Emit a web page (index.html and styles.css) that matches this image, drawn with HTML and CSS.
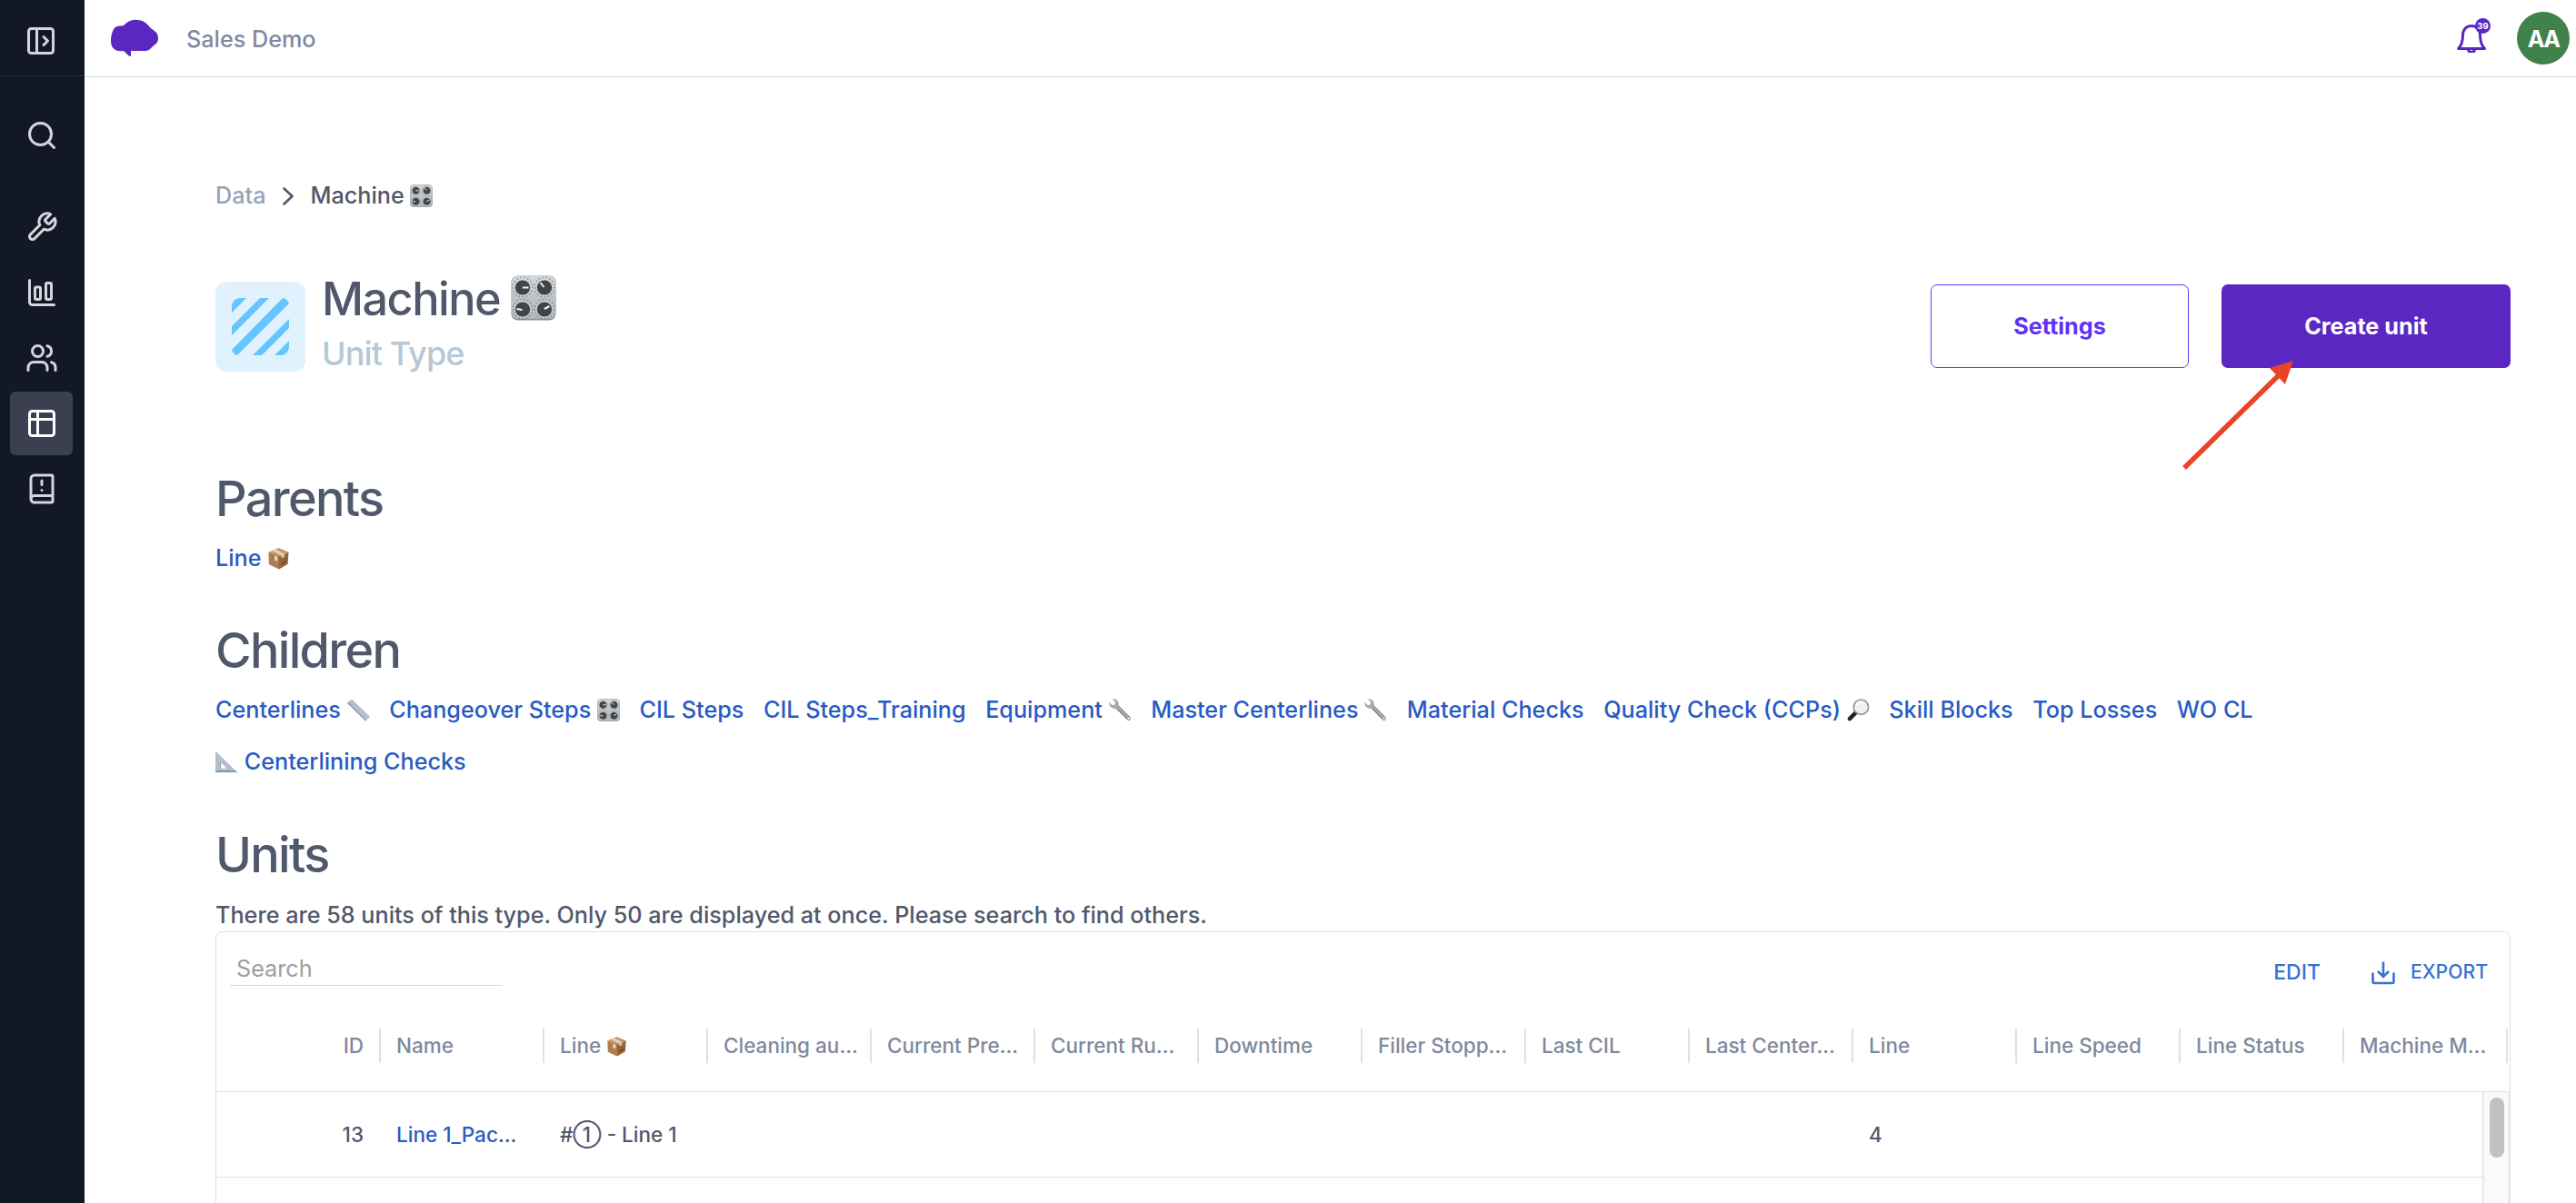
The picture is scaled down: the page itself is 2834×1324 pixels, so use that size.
FILE: index.html
```html
<!DOCTYPE html>
<html lang="en">
<head>
    <meta charset="UTF-8">
    <meta name="viewport" content="width=device-width, initial-scale=1.0">
    <title>Machine - Sales Demo</title>
    <link rel="stylesheet" href="styles.css">
</head>
<body>
    <!-- shared emoji pictures -->
    <svg class="defs" aria-hidden="true">
        <defs>
            <linearGradient id="metal" x1="0" y1="0" x2="0" y2="1">
                <stop offset="0" stop-color="#d6d9dc"/>
                <stop offset="0.5" stop-color="#bfc3c6"/>
                <stop offset="1" stop-color="#b8bbbe"/>
            </linearGradient>
            <symbol id="knobs" viewBox="0 0 50 50">
                <rect x="0.5" y="0.5" width="49" height="49" rx="7" fill="#8b8e91"/>
                <rect x="1" y="0.8" width="48" height="47" rx="6.5" fill="url(#metal)"/>
                <g fill="none" stroke="#6d7175" stroke-width="1.2" stroke-dasharray="1.2 2.8">
                    <circle cx="13" cy="13" r="10.8"/><circle cx="37" cy="13" r="10.8"/>
                    <circle cx="13" cy="37" r="10.8"/><circle cx="37" cy="37" r="10.8"/>
                </g>
                <g fill="#424548" stroke="#e3e5e6" stroke-width="0.8">
                    <circle cx="13" cy="13.5" r="8.6"/><circle cx="37" cy="13.5" r="8.6"/>
                    <circle cx="13" cy="37.5" r="8.6"/><circle cx="37" cy="37.5" r="8.6"/>
                </g>
                <path d="M13 13.5h6.5M36.5 13l-4-5M12.5 38l-6-1M37 37l5.5-3" stroke="#f2f3f3" stroke-width="2"/>
            </symbol>
            <symbol id="package" viewBox="0 0 26 26">
                <path d="M1.500 6 13.500 10.500V25.500L2 20z" fill="#b07c4c"/>
                <path d="M24.500 6 13.500 10.500v15L23.500 19.500z" fill="#936338"/>
                <path d="M1.500 6 13 1l11.500 5-11 4.500z" fill="#c39766"/>
                <path d="m5.500 4.200 4-1.700L20 8l-4 1.700z" fill="#e2d3bf"/>
                <path d="m16 9.700 4-1.700v3.500l-4 1.500z" fill="#d3bfa4"/>
                <path d="m8.500 10 3 1.200v5L8.500 15z" fill="#e6e2df"/>
                <path d="m16.500 19 5-2" stroke="#6d4724" stroke-width="1.600"/>
            </symbol>
            <symbol id="ruler" viewBox="0 0 26 26">
                <path d="M0 5 5 0.500 26 20.500 21 25.500z" fill="#b4c2d1"/>
                <path d="M0 5 21 25.500l1-1L1 4z" fill="#8b9bac"/>
                <path d="m5 4 2-2M8 7l2-2M11 10l2-2M14 13l2-2M17 16l2-2M20 19l2-2" stroke="#92a2b3" stroke-width="0.8"/>
            </symbol>
            <symbol id="wrench" viewBox="0 0 26 26">
                <path d="m9 9 13.500 13.500" stroke="#858585" stroke-width="4.500" stroke-linecap="round"/>
                <path d="m9 8.500 13 13" stroke="#bcbcbc" stroke-width="1.500"/>
                <path d="M0.500 4 4 7.500l3-1V3L4 0.500C8 -0.500 12 3 11 8c-1 4-6 4-8 2C1 9 0 6 0.500 4z" fill="#a5acb1"/>
                <circle cx="22.500" cy="22.500" r="1.200" fill="#fff"/>
            </symbol>
            <symbol id="magnifier" viewBox="0 0 26 26">
                <path d="m10 16-7 7" stroke="#222" stroke-width="4.500" stroke-linecap="round"/>
                <circle cx="16" cy="9.500" r="8.500" fill="#eef0f1" stroke="#8d9194" stroke-width="1.600"/>
                <path d="M11 8c1-3 4-4 7-3" stroke="#fff" stroke-width="2" fill="none"/>
            </symbol>
            <symbol id="triangle" viewBox="0 0 26 26">
                <path d="M0 0.500V25h25z M5 12.500v8h8z" fill="#afbfcd" fill-rule="evenodd"/>
                <path d="M0 23v2h25l-2-2zM5 12.500v8h1.300v-7z" fill="#8598aa"/>
            </symbol>
        </defs>
    </svg>

    <div class="app">
        <nav class="sidebar">
            <div class="sidebar-toggle">
                <svg class="icon" viewBox="0 0 24 24"><rect x="3" y="3" width="18" height="18" rx="2"/><path d="M9 3v18M14 9l3 3-3 3"/></svg>
            </div>
            <a class="nav-item nav-search">
                <svg class="icon" viewBox="0 0 24 24"><circle cx="11" cy="11" r="8"/><path d="m21 21-4.300-4.300"/></svg>
            </a>
            <a class="nav-item">
                <svg class="icon" viewBox="0 0 24 24"><path d="M14.700 6.300a1 1 0 0 0 0 1.400l1.600 1.600a1 1 0 0 0 1.400 0l3.770-3.770a6 6 0 0 1-7.940 7.940l-6.910 6.910a2.120 2.120 0 0 1-3-3l6.910-6.910a6 6 0 0 1 7.940-7.940l-3.760 3.760z"/></svg>
            </a>
            <a class="nav-item">
                <svg class="icon" viewBox="0 0 24 24"><path d="M3 3v16a2 2 0 0 0 2 2h16"/><rect x="15" y="5" width="4" height="12" rx="1"/><rect x="7" y="8" width="4" height="9" rx="1"/></svg>
            </a>
            <a class="nav-item">
                <svg class="icon" viewBox="0 0 24 24"><path d="M16 21v-2a4 4 0 0 0-4-4H6a4 4 0 0 0-4 4v2"/><circle cx="9" cy="7" r="4"/><path d="M22 21v-2a4 4 0 0 0-3-3.870M16 3.130a4 4 0 0 1 0 7.750"/></svg>
            </a>
            <a class="nav-item active">
                <svg class="icon" viewBox="0 0 24 24"><rect x="3" y="3" width="18" height="18" rx="2"/><path d="M9 3v18M3 9h18"/></svg>
            </a>
            <a class="nav-item">
                <svg class="icon" viewBox="0 0 24 24"><path d="M4 19.500v-15A2.500 2.500 0 0 1 6.500 2H19a1 1 0 0 1 1 1v18a1 1 0 0 1-1 1H6.500a1 1 0 0 1 0-5H20M12 6v3M12 13h.01"/></svg>
            </a>
        </nav>

        <div class="page">
            <header class="topbar">
                <svg class="logo" viewBox="0 0 54 42"><path d="M15 7C20 2 25 0 30 1c6 0 10 3 14 8 2 3 9 4 9 12 0 6-4 7-7 10-3 4-6 4-9 4H23v6c-4 0-5-5-9-6C6 36 1 32 1 24 1 18 3 9 8 8c3-1 5 0 7-1z"/></svg>
                <span class="workspace">Sales Demo</span>
                <div class="bell">
                    <svg viewBox="0 0 34 36"><path d="M2.500 31.500h29c-4-4-5-8-5-15 0-6-4-10-9.500-10s-9.500 4-9.500 10c0 7-1 11-5 15z" fill="none" stroke="#5a27c2" stroke-width="3" stroke-linejoin="round"/><path d="M13.500 32.500c.500 4 6.500 4 7 0" fill="none" stroke="#5a27c2" stroke-width="3"/></svg>
                    <span class="bell-count">39</span>
                </div>
                <div class="avatar">AA</div>
            </header>

            <main class="content">
                <div class="breadcrumb">
                    <span class="crumb">Data</span>
                    <svg class="chevron" viewBox="0 0 12 20"><path d="m1.500 1.500 9 8.500-9 8.500"/></svg>
                    <span>Machine <svg class="emoji"><use href="#knobs"/></svg></span>
                </div>

                <div class="title-row">
                    <div class="tile">
                        <svg viewBox="0 0 63 63"><path d="M0 9a9 9 0 0 1 9-9h7L0 16zM31 0h10L0 41V31zM56 0q5 1 7 6L6 63q-5-1-6-6zM63 23v10L33 63H23zM63 47v7a9 9 0 0 1-9 9h-7z"/></svg>
                    </div>
                    <div class="title-text">
                        <h1>Machine <svg class="emoji"><use href="#knobs"/></svg></h1>
                        <div class="subtitle">Unit Type</div>
                    </div>
                    <button class="btn btn-outline">Settings</button>
                    <div class="create-wrap">
                        <button class="btn btn-primary">Create unit</button>
                        <svg class="arrow" viewBox="0 0 124 124"><path d="M3 120 108 17" stroke="#ec4226" stroke-width="5.500"/><path d="M123 2 97 10l17 18z" fill="#ec4226"/></svg>
                    </div>
                </div>

                <h2 class="h-parents">Parents</h2>
                <div class="links">
                    <a>Line <svg class="emoji"><use href="#package"/></svg></a>
                </div>

                <h2>Children</h2>
                <div class="links">
                    <a>Centerlines <svg class="emoji"><use href="#ruler"/></svg></a>
                    <a>Changeover Steps <svg class="emoji"><use href="#knobs"/></svg></a>
                    <a>CIL Steps</a>
                    <a>CIL Steps_Training</a>
                    <a>Equipment <svg class="emoji"><use href="#wrench"/></svg></a>
                    <a>Master Centerlines <svg class="emoji"><use href="#wrench"/></svg></a>
                    <a>Material Checks</a>
                    <a>Quality Check (CCPs) <svg class="emoji"><use href="#magnifier"/></svg></a>
                    <a>Skill Blocks</a>
                    <a>Top Losses</a>
                    <a>WO CL</a>
                    <a><svg class="emoji"><use href="#triangle"/></svg> Centerlining Checks</a>
                </div>

                <h2 class="h-units">Units</h2>
                <p class="note">There are 58 units of this type. Only 50 are displayed at once. Please search to find others.</p>

                <div class="grid-panel">
                    <div class="toolbar">
                        <div class="search">Search</div>
                        <a class="edit">EDIT</a>
                        <a class="export">
                            <svg viewBox="0 0 26 26"><path d="M1.500 12.500v10q0 1.500 1.500 1.500h20q1.500 0 1.500-1.500v-10M13 0.500v16M7 11l6 6 6-6"/></svg>
                            EXPORT
                        </a>
                    </div>
                    <div class="row head">
                        <div class="cell id">ID</div>
                        <div class="cell">Name</div>
                        <div class="cell">Line <svg class="emoji"><use href="#package"/></svg></div>
                        <div class="cell">Cleaning au...</div>
                        <div class="cell">Current Pre...</div>
                        <div class="cell">Current Ru...</div>
                        <div class="cell">Downtime</div>
                        <div class="cell">Filler Stopp...</div>
                        <div class="cell">Last CIL</div>
                        <div class="cell">Last Center...</div>
                        <div class="cell">Line</div>
                        <div class="cell">Line Speed</div>
                        <div class="cell">Line Status</div>
                        <div class="cell">Machine M...</div>
                    </div>
                    <div class="grid-body">
                        <div class="rows">
                            <div class="row">
                                <div class="cell id">13</div>
                                <div class="cell"><a>Line 1_Pac</a>...</div>
                                <div class="cell">#① - Line 1</div>
                                <div class="cell"></div>
                                <div class="cell"></div>
                                <div class="cell"></div>
                                <div class="cell"></div>
                                <div class="cell"></div>
                                <div class="cell"></div>
                                <div class="cell"></div>
                                <div class="cell">4</div>
                                <div class="cell"></div>
                                <div class="cell"></div>
                                <div class="cell"></div>
                            </div>
                        </div>
                        <div class="scrollbar"><div class="thumb"></div></div>
                    </div>
                </div>
            </main>
        </div>
    </div>
</body>
</html>
```

FILE: styles.css
```css
* {
    box-sizing: border-box;
}
body {
    margin: 0;
    font-family: Inter, "Liberation Sans", sans-serif;
    font-size: 25.2px;
    font-weight: 500;
    color: #50586b;
    background: #fff;
    overflow: hidden;
}
.defs {
    position: absolute;
    width: 0;
    height: 0;
}
.app {
    display: flex;
    height: 100vh;
    overflow: hidden;
}
.emoji {
    width: 25px;
    height: 25px;
    vertical-align: -4px;
}

/* sidebar */
.sidebar {
    width: 93px;
    flex: none;
    background: #121826;
}
.sidebar-toggle {
    height: 84px;
    padding: 27px 0 0 27px;
    border-bottom: 1px solid #272d3a;
}
.icon {
    display: block;
    width: 36px;
    height: 36px;
    fill: none;
    stroke: #d3d6dc;
    stroke-width: 2;
    stroke-linecap: round;
    stroke-linejoin: round;
}
.nav-item {
    display: flex;
    width: 69px;
    height: 70px;
    margin: 0 0 2px 11px;
    padding-left: 17px;
    align-items: center;
    border-radius: 6px;
}
.nav-search {
    margin-top: 30px;
    margin-bottom: 31px;
}
.nav-item.active {
    background: #3a4050;
}
.active .icon {
    stroke: #fff;
}

/* top bar */
.page {
    flex: 1;
    min-width: 0;
}
.topbar {
    display: flex;
    align-items: center;
    height: 85px;
    padding: 0 7px 1px 28px;
    border-bottom: 1px solid #d9dfea;
}
.logo {
    width: 54px;
    height: 42px;
    fill: #5a27c2;
}
.workspace {
    margin-top: 2px;
    margin-left: 30px;
    color: #7f8aa1;
}
.bell {
    position: relative;
    width: 34px;
    height: 36px;
    margin-top: -4px;
    margin-left: auto;
    margin-right: 33px;
}
.bell svg {
    display: block;
    width: 34px;
    height: 36px;
}
.bell-count {
    position: absolute;
    top: -2px;
    left: 21px;
    width: 17px;
    height: 17px;
    border-radius: 50%;
    background: #5a27c2;
    color: #fff;
    font-size: 9.5px;
    font-weight: 700;
    line-height: 17px;
    text-align: center;
}
.avatar {
    width: 58px;
    height: 58px;
    border-radius: 50%;
    background: #3f824b;
    color: #fff;
    font-size: 25.2px;
    font-weight: 700;
    letter-spacing: -1.8px;
    line-height: 60px;
    text-align: center;
}

/* content */
.content {
    padding: 110px 72px 0 144px;
}
.breadcrumb {
    display: flex;
    align-items: center;
    height: 40px;
}
.crumb {
    color: #97a3b8;
}
.chevron {
    width: 12px;
    height: 20px;
    margin: 2px 18px 0 19px;
    fill: none;
    stroke: #50586b;
    stroke-width: 2.6;
    stroke-linecap: round;
    stroke-linejoin: round;
}
.title-row {
    display: flex;
    align-items: center;
    height: 110px;
    margin-top: 69px;
}
.tile {
    display: flex;
    width: 99px;
    height: 99px;
    align-items: center;
    justify-content: center;
    border-radius: 12px;
    background: #e0f2fe;
}
.tile svg {
    width: 63px;
    height: 63px;
    fill: #66c4ff;
}
.title-text {
    flex: 1;
    margin-left: 18px;
}
h1 {
    margin: 0;
    font-size: 50.4px;
    font-weight: 500;
    letter-spacing: -0.03em;
    line-height: 61px;
}
h1 .emoji {
    width: 50px;
    height: 50px;
    vertical-align: -6px;
}
.subtitle {
    color: #b6c8d6;
    font-size: 36px;
    letter-spacing: -0.025em;
    line-height: 61px;
}
.btn {
    display: block;
    height: 92px;
    border: none;
    border-radius: 7px;
    font-family: inherit;
    font-size: 25.2px;
    font-weight: 700;
}
.btn-outline {
    width: 284px;
    margin-right: 36px;
    border: 1px solid #6439f5;
    background: #fff;
    color: #5f33f5;
}
.btn-primary {
    width: 318px;
    background: #5a27c2;
    color: #fff;
}
.create-wrap {
    position: relative;
}
.arrow {
    position: absolute;
    left: -44px;
    top: 82px;
    width: 124px;
    height: 124px;
}
h2 {
    margin: 40px 0 0;
    font-size: 54px;
    font-weight: 500;
    letter-spacing: -0.031em;
    line-height: 65px;
}
h2.h-parents {
    margin-top: 102px;
}
h2.h-units {
    margin-top: 41px;
}
.links {
    display: flex;
    flex-wrap: wrap;
    width: 2300px;
    column-gap: 21.6px;
    margin-top: 5px;
}
a {
    color: #285bc4;
}
.links a {
    height: 57px;
    line-height: 57px;
    white-space: nowrap;
}
.note {
    margin: 16px 0 0;
    line-height: 36px;
}

/* data grid */
.grid-panel {
    height: 320px;
    border: 1px solid #e0e0e0;
    border-radius: 7px 7px 0 0;
}
.toolbar {
    display: flex;
    height: 82px;
    padding-right: 24px;
}
.search {
    width: 299px;
    height: 59px;
    margin-left: 15px;
    padding-left: 7px;
    border-bottom: 1px solid #d9d9d9;
    color: #9e9e9e;
    font-weight: 400;
    line-height: 80px;
}
.edit,
.export {
    color: #3673d0;
    font-size: 23px;
    line-height: 88px;
}
.edit {
    margin-left: auto;
}
.export {
    display: flex;
    margin-left: 56px;
    gap: 17px;
    font-size: 21.2px;
    line-height: 86px;
}
.export svg {
    width: 26px;
    height: 26px;
    margin-top: 32px;
    fill: none;
    stroke: #3673d0;
    stroke-width: 2.6;
}
.row {
    display: flex;
    height: 94px;
    padding-left: 1px;
    border-bottom: 1px solid #e0e0e0;
    font-size: 22.5px;
}
.cell {
    flex: none;
    width: 180px;
    padding-left: 17px;
    line-height: 94px;
    white-space: nowrap;
}
.cell.id {
    padding: 0 19px 0 0;
    text-align: right;
}
.cell .emoji {
    width: 23px;
    height: 23px;
}
.head {
    padding-top: 24px;
    color: #7f889d;
}
.head .cell {
    height: 38px;
    border-right: 2px solid #e0e0e0;
    line-height: 38px;
}
.head .cell.id {
    padding-right: 17px;
}
.grid-body {
    display: flex;
    height: 142px;
}
.rows {
    flex: 1;
    min-width: 0;
    overflow: hidden;
}
.scrollbar {
    width: 30px;
    padding: 6px 0 0 6px;
    border-left: 2px solid #e8e8e8;
    border-right: 2px solid #ededed;
    background: #fafafa;
}
.thumb {
    width: 16px;
    height: 66px;
    border-radius: 8px;
    background: #c1c1c1;
}
```
